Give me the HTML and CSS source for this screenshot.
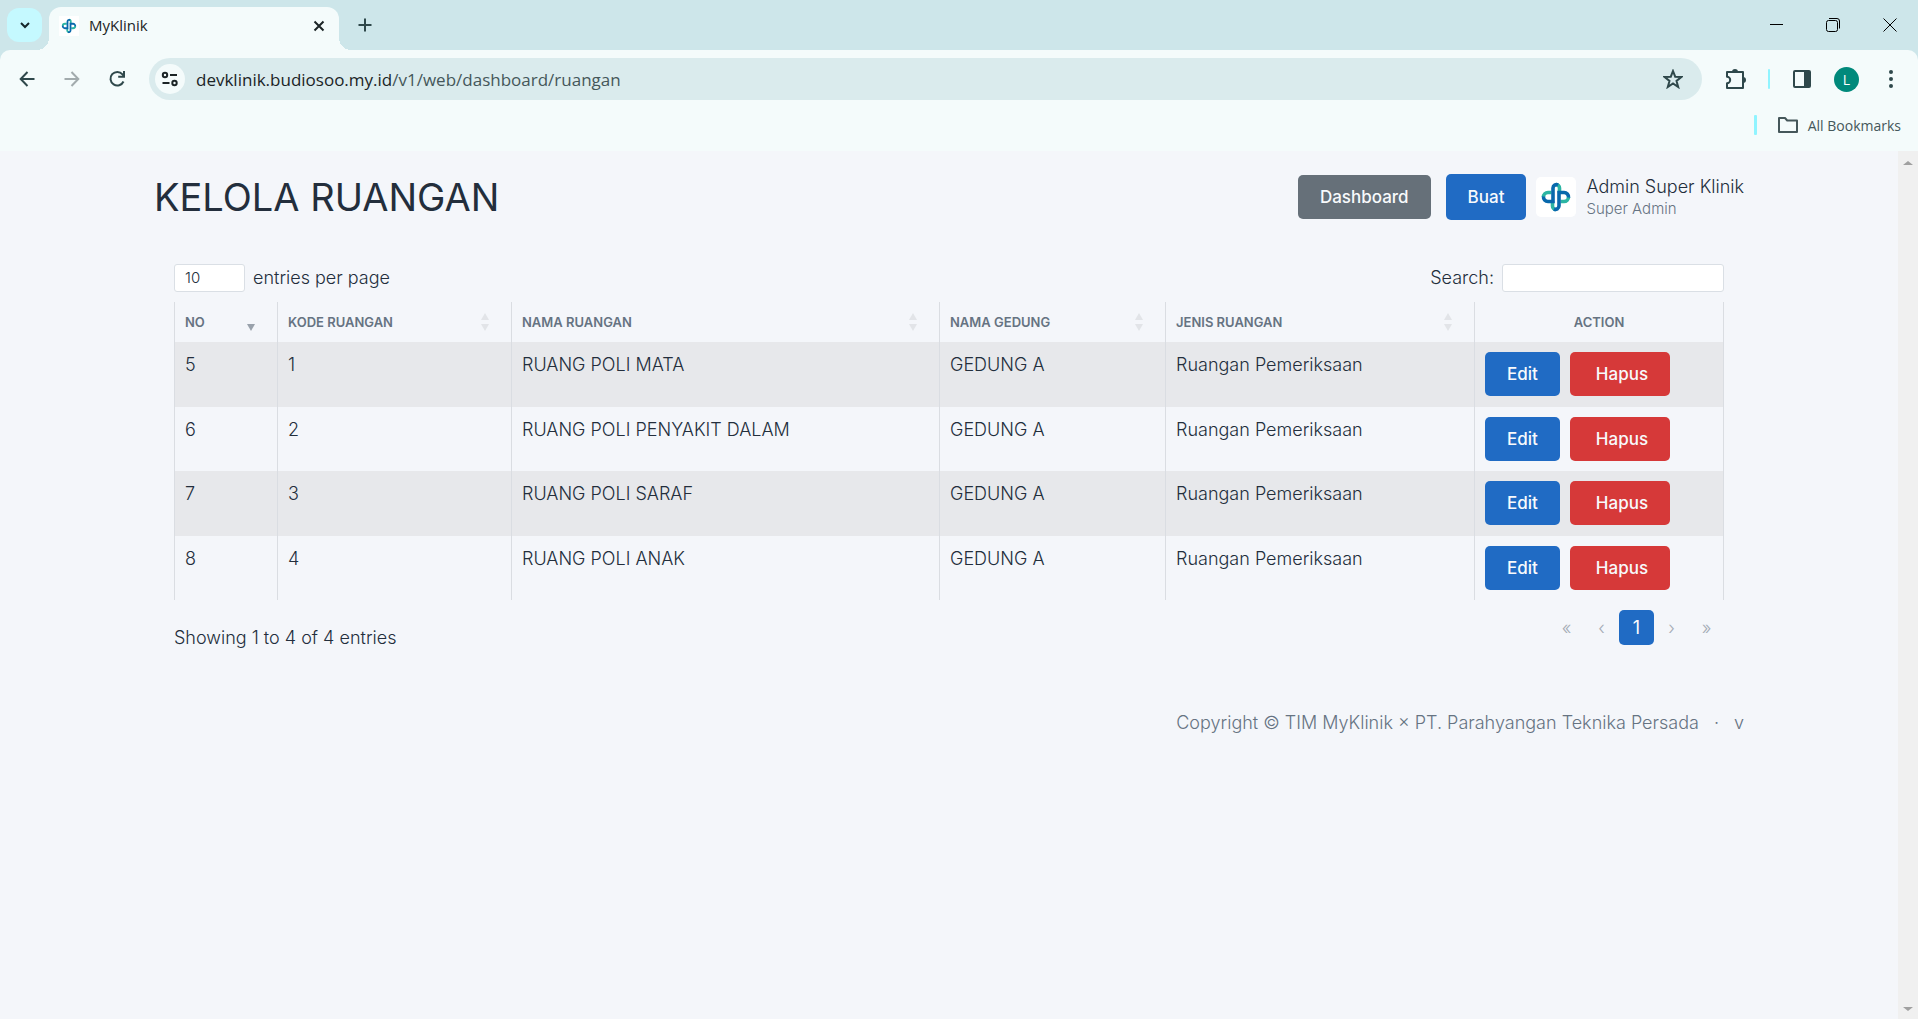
FILE: index.html
```html
<!DOCTYPE html>
<html lang="id">
<head>
<meta charset="utf-8">
<title>MyKlinik</title>
<link rel="stylesheet" href="styles.css">
</head>
<body>
<svg class="sprite" aria-hidden="true">
  <symbol id="logo" viewBox="0 0 40 40">
    <g fill="none" stroke-width="3.600">
      <path stroke="#2bb5a3" d="M20 7.500a3.500 3.500 0 0 1 3.500 3.500v5M20 32.500a3.500 3.500 0 0 1-3.500-3.500v-5M7.500 20a4.500 4.500 0 0 1 4.500-4.500h3.500M32.500 20a4.500 4.500 0 0 1-4.500 4.500h-3.500"/>
      <path stroke="#0868ac" d="M7.500 19.500a4.500 4.500 0 0 0 4.500 5h5V11a3.500 3.500 0 0 1 5-3M32.500 20.500a4.500 4.500 0 0 0-4.500-5h-5V29a3.500 3.500 0 0 1-5 3"/>
    </g>
  </symbol>
</svg>

<header class="browser">
  <div class="tabstrip">
    <button class="tab-search" aria-label="Search tabs"><svg width="14" height="14" viewBox="0 0 14 14"><path d="M3 5l4 4 4-4" fill="none" stroke="currentColor" stroke-width="2"/></svg></button>
    <div class="tab">
      <svg class="favicon" width="20" height="20" viewBox="0 0 40 40"><use href="#logo" width="40" height="40"/></svg>
      <span class="tab-title">MyKlinik</span>
      <button class="icon-button" aria-label="Close tab"><svg width="12" height="12" viewBox="0 0 12 12"><path d="m1.500 1.500 9 9m0-9-9 9" stroke="currentColor" stroke-width="2"/></svg></button>
    </div>
    <button class="icon-button new-tab" aria-label="New tab"><svg width="14" height="14" viewBox="0 0 14 14"><path d="M7 .5v13M.5 7h13" stroke="currentColor" stroke-width="2"/></svg></button>
    <div class="window-controls">
      <button class="icon-button" aria-label="Minimize"><svg width="14" height="14" viewBox="0 0 14 14"><path d="M1 6.500h13" stroke="currentColor"/></svg></button>
      <button class="icon-button" aria-label="Restore"><svg width="14" height="14" viewBox="0 0 14 14"><path d="M3 .5h8a2.500 2.500 0 0 1 2.500 2.500v7.500" fill="none" stroke="currentColor"/><rect x=".5" y="2.500" width="11" height="11" rx="2" fill="none" stroke="currentColor"/></svg></button>
      <button class="icon-button" aria-label="Close"><svg width="14" height="14" viewBox="0 0 14 14"><path d="m.5.5 13 13m0-13-13 13" stroke="currentColor"/></svg></button>
    </div>
  </div>

  <div class="toolbar">
    <div class="nav-buttons">
      <button class="icon-button" aria-label="Back"><svg width="16" height="16" viewBox="0 0 16 16"><path d="M15.500 8H2m6.500-7L1.700 8l6.800 7" fill="none" stroke="currentColor" stroke-width="2"/></svg></button>
      <button class="icon-button" aria-label="Forward" disabled><svg width="16" height="16" viewBox="0 0 16 16"><path d="M.5 8H14M7.500 1l6.800 7-6.800 7" fill="none" stroke="currentColor" stroke-width="2"/></svg></button>
      <button class="icon-button" aria-label="Reload"><svg width="18" height="18" viewBox="0 0 18 18"><path d="M15.500 11.500a6.800 6.800 0 1 1-1-7.200L16 6M16 1v5.800h-5.800" fill="none" stroke="currentColor" stroke-width="2"/></svg></button>
    </div>
    <div class="omnibox">
      <button class="site-info" aria-label="View site information"><svg width="18" height="16" viewBox="0 0 18 16"><g fill="none" stroke="currentColor" stroke-width="2"><circle cx="4" cy="4" r="2.200"/><circle cx="13.500" cy="12" r="2.200"/><path d="M9 4h7M1.500 12h7"/></g></svg></button>
      <span class="url">devklinik.budiosoo.my.id<span class="path">/v1/web/dashboard/ruangan</span></span>
      <button class="icon-button" aria-label="Bookmark this tab"><svg width="20" height="20" viewBox="0 0 20 20"><path d="m10 2 2.200 5.700 6.100.3-4.800 3.900L15.200 18 10 14.500 4.800 18l1.700-6.100L1.700 8l6.100-.3z" fill="none" stroke="currentColor" stroke-width="2"/></svg></button>
    </div>
    <div class="toolbar-actions">
      <button class="icon-button" aria-label="Extensions"><svg width="22" height="22" viewBox="0 0 22 22"><path d="M2 4h16v16H2v-4.800a3 3 0 0 0 0-6.400z" fill="none" stroke="currentColor" stroke-width="2" stroke-linejoin="round"/><path d="M7 4a3 3 0 0 1 6 0zM18 9a3 3 0 0 1 0 6z" fill="currentColor"/></svg></button>
      <span class="divider"></span>
      <button class="icon-button" aria-label="Side panel"><svg width="18" height="18" viewBox="0 0 18 18"><rect x="1" y="1" width="16" height="16" rx="1" fill="none" stroke="currentColor" stroke-width="2"/><path d="M11 1h6v16h-6z" fill="currentColor"/></svg></button>
      <button class="profile" aria-label="Profile">L</button>
      <button class="icon-button" aria-label="Menu"><svg width="6" height="18" viewBox="0 0 6 18" fill="currentColor"><circle cx="3" cy="2" r="2"/><circle cx="3" cy="9" r="2"/><circle cx="3" cy="16" r="2"/></svg></button>
    </div>
  </div>

  <div class="bookmarks">
    <span class="divider"></span>
    <button class="all-bookmarks"><svg width="22" height="18" viewBox="0 0 22 18"><path d="M2 2h6l2.200 2.500H20V16H2z" fill="none" stroke="currentColor" stroke-width="2" stroke-linejoin="round"/></svg>All Bookmarks</button>
  </div>
</header>

<div class="viewport">
  <div class="page">
    <div class="page-header">
      <h1>KELOLA RUANGAN</h1>
      <div class="header-actions">
        <a class="btn secondary" href="#">Dashboard</a>
        <a class="btn primary" href="#">Buat</a>
        <a class="account" href="#">
          <span class="avatar"><svg width="40" height="40"><use href="#logo"/></svg></span>
          <span class="account-text"><span>Admin Super Klinik</span><small>Super Admin</small></span>
        </a>
      </div>
    </div>

    <main class="listing">
      <div class="table-controls">
        <label class="length"><select><option>10</option></select> entries per page</label>
        <label class="search">Search: <input type="search"></label>
      </div>
      <table>
        <colgroup><col class="c-no"><col class="c-code"><col class="c-room"><col class="c-building"><col class="c-type"><col class="c-action"></colgroup>
        <thead>
          <tr>
            <th class="sorted"><div>No<span class="sort"></span></div></th>
            <th><div>Kode Ruangan<span class="sort"></span></div></th>
            <th><div>Nama Ruangan<span class="sort"></span></div></th>
            <th><div>Nama Gedung<span class="sort"></span></div></th>
            <th><div>Jenis Ruangan<span class="sort"></span></div></th>
            <th class="action">Action</th>
          </tr>
        </thead>
        <tbody>
          <tr><td>5</td><td>1</td><td>RUANG POLI MATA</td><td>GEDUNG A</td><td>Ruangan Pemeriksaan</td><td><div class="row-actions"><button class="btn primary">Edit</button><button class="btn danger">Hapus</button></div></td></tr>
          <tr><td>6</td><td>2</td><td>RUANG POLI PENYAKIT DALAM</td><td>GEDUNG A</td><td>Ruangan Pemeriksaan</td><td><div class="row-actions"><button class="btn primary">Edit</button><button class="btn danger">Hapus</button></div></td></tr>
          <tr><td>7</td><td>3</td><td>RUANG POLI SARAF</td><td>GEDUNG A</td><td>Ruangan Pemeriksaan</td><td><div class="row-actions"><button class="btn primary">Edit</button><button class="btn danger">Hapus</button></div></td></tr>
          <tr><td>8</td><td>4</td><td>RUANG POLI ANAK</td><td>GEDUNG A</td><td>Ruangan Pemeriksaan</td><td><div class="row-actions"><button class="btn primary">Edit</button><button class="btn danger">Hapus</button></div></td></tr>
        </tbody>
      </table>
      <div class="table-footer">
        <p>Showing 1 to 4 of 4 entries</p>
        <nav class="pagination" aria-label="Pagination">
          <button disabled>«</button><button disabled>‹</button><button class="current">1</button><button disabled>›</button><button disabled>»</button>
        </nav>
      </div>
    </main>

    <footer><span>Copyright © TIM MyKlinik × PT. Parahyangan Teknika Persada</span><span>·</span><span>v</span></footer>
  </div>
  <div class="scrollbar" aria-hidden="true">
    <svg width="10" height="4" viewBox="0 0 10 4"><path d="M0 4 5 0l5 4z"/></svg>
    <svg width="10" height="4" viewBox="0 0 10 4"><path d="m0 0 5 4 5-4z"/></svg>
  </div>
</div>
</body>
</html>
```
FILE: styles.css
```css
* { box-sizing: border-box; }

body {
  margin: 0;
  min-height: 100vh;
  display: flex;
  flex-direction: column;
  background: #f4f6fa;
  color: #232e3c;
  font-family: Inter, "Liberation Sans", sans-serif;
  font-size: 18px;
  font-weight: 300;
  line-height: 25px;
}

button, input, select { font: inherit; color: inherit; }
button { border: 0; padding: 0; background: none; }
a { color: inherit; text-decoration: none; }
svg { display: block; flex: none; }
.sprite { position: absolute; width: 0; height: 0; }

/* Browser frame */
.browser {
  background: #cde6ea;
  color: #2f484b;
  font-family: "Open Sans", "Noto Sans", sans-serif;
  font-weight: 400;
}

.icon-button {
  width: 28px;
  height: 28px;
  display: flex;
  align-items: center;
  justify-content: center;
  flex: none;
}
.icon-button:disabled { color: #a2abad; }

.tabstrip {
  height: 50px;
  display: flex;
  align-items: center;
  padding-left: 7px;
}
.tab-search {
  width: 35px;
  height: 34px;
  display: grid;
  place-items: center;
  border-radius: 12px;
  background: #c5f9ff;
  color: #14262a;
}
.tab {
  position: relative;
  align-self: flex-end;
  width: 290px;
  height: 43px;
  margin-left: 7px;
  padding: 0 10px 6px;
  display: flex;
  align-items: center;
  border-radius: 12px 12px 0 0;
  background: #f4fbfb;
}
/* flared feet of the active tab */
.tab::before, .tab::after {
  content: "";
  position: absolute;
  bottom: 0;
  width: 12px;
  height: 12px;
}
.tab::before { right: 100%; background: radial-gradient(circle at 0 0, transparent 12px, #f4fbfb 12px); }
.tab::after { left: 100%; background: radial-gradient(circle at 100% 0, transparent 12px, #f4fbfb 12px); }
.favicon { background: #fff; }
.tab-title { flex: 1; margin-left: 10px; font-size: 15px; color: #1b2426; }
.tab .icon-button { width: 20px; color: #1b2426; }
.new-tab { margin-left: 12px; }
.window-controls { display: flex; gap: 29px; margin-left: auto; padding-right: 14px; color: #000; }

.toolbar {
  height: 58px;
  display: flex;
  align-items: center;
  padding: 0 13px;
  border-radius: 10px 10px 0 0;
  background: #f4fbfb;
}
.nav-buttons { display: flex; gap: 17px; margin-right: 18px; }
.omnibox {
  flex: 1;
  height: 42px;
  display: flex;
  align-items: center;
  padding: 0 15px 0 6px;
  border-radius: 21px;
  background: #daebed;
}
.site-info {
  width: 30px;
  height: 30px;
  display: grid;
  place-items: center;
  border-radius: 50%;
  background: #f4fbfb;
  color: #1b2426;
}
.url { flex: 1; margin-left: 11px; font-size: 17px; color: #1b2426; }
.path { color: #45575a; }
.toolbar-actions { display: flex; align-items: center; gap: 18px; padding-left: 20px; }
.divider { width: 2px; height: 20px; border-radius: 1px; background: #90f4ff; }
.profile {
  width: 25px;
  height: 25px;
  border-radius: 50%;
  background: #00897b;
  color: #fff;
  font-size: 14px;
  line-height: 25px;
}

.bookmarks {
  height: 43px;
  display: flex;
  align-items: center;
  justify-content: flex-end;
  gap: 20px;
  padding: 0 17px 9px 0;
  background: #f4fbfb;
}
.bookmarks .divider { width: 3px; }
.all-bookmarks { display: flex; align-items: center; gap: 9px; font-size: 14px; color: #45575a; }

/* Page */
.viewport { flex: 1; display: flex; }
.page { flex: 1; max-width: 1650px; margin: 0 auto; padding: 0 30px; }
.scrollbar {
  width: 20px;
  display: flex;
  flex-direction: column;
  align-items: center;
  justify-content: space-between;
  padding: 10px 0 8px;
  background: #f0f0f0;
  fill: #a0a0a0;
}

.page-header {
  display: flex;
  align-items: center;
  justify-content: space-between;
  padding-top: 21px;
}
h1 { margin: 0; font-size: 38px; line-height: 50px; font-weight: 400; }
.header-actions { display: flex; align-items: center; }

.btn {
  display: inline-flex;
  align-items: center;
  justify-content: center;
  height: 44px;
  padding: 0 22px;
  border-radius: 5px;
  color: #f8fafc;
  font-size: 17px;
  font-weight: 500;
}
.primary { background: #206bc4; }
.secondary { background: #667079; }
.danger { background: #d63939; padding-left: 26px; }

.header-actions .primary { height: 46px; margin: 0 10px 0 15px; }
.account { display: flex; align-items: center; }
.avatar { border-radius: 5px; background: #fff; }
.account-text { display: flex; flex-direction: column; margin-left: 10px; line-height: 24px; }
.account-text small { font-size: 15px; line-height: 20px; color: #667382; }

.listing { padding: 42px 20px 0; }
.table-controls { display: flex; justify-content: space-between; padding-bottom: 10px; }
.table-controls label { display: flex; align-items: center; gap: 8px; line-height: 24px; }
.table-controls select, .table-controls input {
  height: 28px;
  margin: 0;
  border: 1px solid #dadfe5;
  border-radius: 3px;
  background: #fff;
  font-size: 15px;
  appearance: none;
}
.table-controls select { width: 71px; padding: 0 10px; }
.table-controls input { width: 222px; }

table { width: 100%; table-layout: fixed; border-collapse: collapse; }
.c-no { width: 103px; }
.c-code { width: 234px; }
.c-room { width: 428px; }
.c-building { width: 226px; }
.c-type { width: 309px; }
th, td { border: 0 solid #dadde2; border-width: 0 1px; text-align: left; }
th {
  height: 40px;
  padding: 0 22px 0 10px;
  color: #667382;
  font-size: 13px;
  line-height: 20px;
  font-weight: 600;
  text-transform: uppercase;
}
th div { display: flex; align-items: center; justify-content: space-between; }
th.action { padding: 0; text-align: center; }
.sort { display: grid; gap: 4px; }
.sort::before, .sort::after { content: ""; border: solid transparent; border-width: 0 4px; }
.sort::before { border-bottom: 7px solid #e2e4e8; }
.sort::after { border-top: 7px solid #e2e4e8; }
.sorted .sort::before { border-bottom-color: transparent; }
.sorted .sort::after { border-top-color: #99a1ab; }
td { height: 64px; padding: 10px; vertical-align: top; }
tbody tr:nth-child(odd) { background: #e7e8eb; }
tbody tr:nth-child(odd) td { height: 65px; }
.row-actions { display: flex; gap: 10px; }

.table-footer { display: flex; justify-content: space-between; padding-top: 10px; }
.table-footer p { margin: 15px 0 0; }
.pagination { display: flex; }
.pagination button { width: 35px; height: 35px; border-radius: 5px; color: #a4abb5; }
.pagination .current { background: #206bc4; color: #f8fafc; font-weight: 400; }

footer { display: flex; justify-content: flex-end; gap: 15px; padding: 60px 0 30px; color: #667382; }
```
